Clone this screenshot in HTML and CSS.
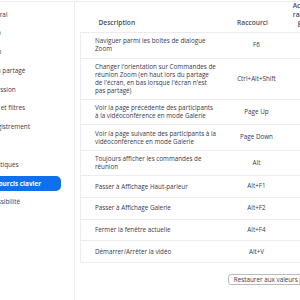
FILE: index.html
```html
<!DOCTYPE html>
<html lang="fr">
<head>
  <meta charset="UTF-8">
  <title>Paramètres - Raccourcis clavier</title>
  <link rel="stylesheet" href="styles.css">
</head>
<body>
<div class="window">
  <!-- SIDEBAR -->
  <nav class="sidebar">
    <a class="nav-item">Général</a>
    <a class="nav-item">Vidéo</a>
    <a class="nav-item">Audio</a>
    <a class="nav-item">Écran partagé</a>
    <a class="nav-item">Discussion</a>
    <a class="nav-item">Fond et filtres</a>
    <a class="nav-item">Enregistrement</a>
    <a class="nav-item">Profil</a>
    <a class="nav-item">Statistiques</a>
    <a class="nav-item active">Raccourcis clavier</a>
    <a class="nav-item">Accessibilité</a>
  </nav>

  <!-- SHORTCUTS -->
  <main class="panel">
    <table class="shortcuts">
      <colgroup><col class="c-desc"><col class="c-key"><col class="c-global"></colgroup>
      <thead>
        <tr>
          <th class="th-desc">Description</th>
          <th class="th-key">Raccourci</th>
          <th class="th-global">Activer le raccourci global</th>
        </tr>
      </thead>
      <tbody>
        <tr><td>Naviguer parmi les boîtes de dialogue Zoom</td><td class="key"><span>F6</span></td><td class="global"><input type="checkbox"></td></tr>
        <tr><td>Changer l'orientation sur Commandes de réunion Zoom (en haut lors du partage de l'écran, en bas lorsque l'écran n'est pas partagé)</td><td class="key"><span>Ctrl+Alt+Shift</span></td><td class="global"><input type="checkbox"></td></tr>
        <tr><td>Voir la page précédente des participants à&nbsp;la vidéoconférence en mode Galerie</td><td class="key"><span>Page Up</span></td><td class="global"><input type="checkbox"></td></tr>
        <tr><td>Voir la page suivante des participants à&nbsp;la vidéoconférence en mode Galerie</td><td class="key"><span>Page Down</span></td><td class="global"><input type="checkbox"></td></tr>
        <tr><td>Toujours afficher les commandes de réunion</td><td class="key"><span>Alt</span></td><td class="global"><input type="checkbox"></td></tr>
        <tr><td>Passer à Affichage Haut-parleur</td><td class="key"><span>Alt+F1</span></td><td class="global"><input type="checkbox"></td></tr>
        <tr><td>Passer à Affichage Galerie</td><td class="key"><span>Alt+F2</span></td><td class="global"><input type="checkbox"></td></tr>
        <tr><td>Fermer la fenêtre actuelle</td><td class="key"><span>Alt+F4</span></td><td class="global"><input type="checkbox"></td></tr>
        <tr><td>Démarrer/Arrêter la vidéo</td><td class="key"><span>Alt+V</span></td><td class="global"><input type="checkbox"></td></tr>
      </tbody>
    </table>
    <div class="actions">
      <button class="reset-btn">Restaurer aux valeurs par défaut</button>
    </div>
  </main>
</div>
</body>
</html>
```

FILE: styles.css
```css
:root{
  --text:#39394d;
  --line:#ececf0;
  --blue:#0e71eb;
}
*{box-sizing:border-box;margin:0;padding:0}
html,body{width:300px;height:300px;overflow:hidden;background:#fff}
body{font-family:'Open Sans','Noto Sans',sans-serif;color:var(--text);padding-top:1px}
.window{display:flex;height:299px;border-top:1px solid var(--line);overflow:hidden}

/* sidebar */
.sidebar{flex:0 0 75px;display:flex;flex-direction:column;gap:3.8px;border-right:1px solid var(--line);padding:4.5px 13px 0 0;overflow:hidden}
.nav-item{display:flex;align-items:center;flex:0 0 15px;margin-left:-40px;padding-left:24px;font-size:6.4px;white-space:nowrap;border-radius:5px;color:var(--text)}
.nav-item.active{background:var(--blue);color:#fff;font-weight:700}

/* table */
.panel{flex:1;padding-left:5px;overflow:hidden}
.shortcuts{width:244px;border-collapse:collapse;table-layout:fixed;font-size:6.3px}
.c-desc{width:142px}.c-key{width:68px}.c-global{width:34px}
th{height:30px;vertical-align:bottom;padding:0 0 4.75px;line-height:8.5px;font-weight:600;font-size:6.6px;color:#4a4a5c;text-align:center}
.th-desc{text-align:left;padding-left:18px}
.th-key{padding-right:8px}
.th-global{padding:0 0 4.75px}
td{border:1px solid var(--line);border-width:1px 0 1px 0;padding:4.2px 0;line-height:8px;vertical-align:middle}
td:first-child{border-left:1px solid var(--line);padding-left:14px;padding-right:6px}
td:last-child{border-right:1px solid var(--line)}
.key{text-align:center}
.key span{display:inline-block;height:12.4px;line-height:12.4px}
.global{text-align:center}
.global input{width:8px;height:8px;vertical-align:middle;visibility:hidden}

/* footer */
.actions{display:flex;justify-content:flex-end;width:256px;margin-top:11px}
.reset-btn{height:11px;padding:0 5px;border:1px solid #b9b9c2;border-radius:3px;background:#fff;color:var(--text);font-family:inherit;font-size:6.3px;white-space:nowrap}
```
